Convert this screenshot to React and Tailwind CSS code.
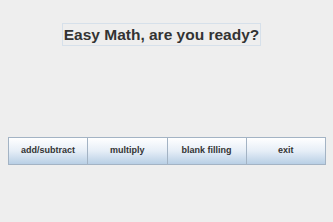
import React from 'react';

const buttons = ["add/subtract", "multiply", "blank filling", "exit"];

const App = () => {
  return (
    <div className="w-[333px] h-[222px] bg-[#eeeeee] flex flex-col" style={{ fontFamily: '"Liberation Sans", Arial, sans-serif' }}>
      <div className="mt-[23px] ml-[62px] h-[23px] w-[199px] border border-[#d6e0ea] flex items-center justify-center whitespace-nowrap text-[15.5px] font-bold text-[#333333]">
        Easy Math, are you ready?
      </div>
      <div className="mt-[91px] ml-[8px] flex w-[318px] h-[28px]">
        {buttons.map((name, i) => (
          <div
            key={i}
            className="flex-1 flex items-center justify-center border border-[#a3b3c4] -ml-[1px] first:ml-0 bg-gradient-to-b from-[#ffffff] via-[#e6eef7] to-[#b8cfe5] text-[9px] font-bold text-[#333333]"
          >
            {name}
          </div>
        ))}
      </div>
    </div>
  );
};

export default App;
